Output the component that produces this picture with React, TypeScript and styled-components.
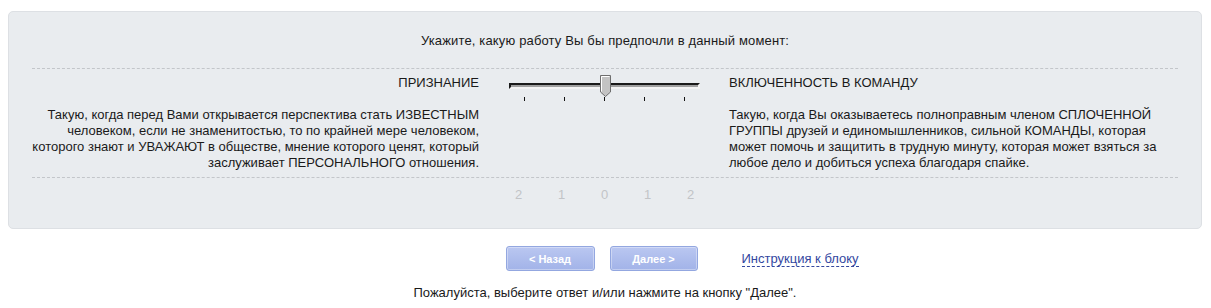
import styled, { createGlobalStyle } from 'styled-components';

const GlobalStyle = createGlobalStyle`
  body {
    margin: 0;
    background: #ffffff;
    font-family: 'Liberation Sans', Arial, sans-serif;
    font-size: 13px;
    color: #1a1a1a;
  }
`;

const Page = styled.div`
  padding: 11px 9px 0 8px;
`;

const Panel = styled.section`
  background: #e9ecef;
  border: 1px solid #dde0e4;
  border-radius: 5px;
  padding: 21px 23px 25px 23px;
`;

const Question = styled.p`
  margin: 0 0 19px;
  text-align: center;
  line-height: 16px;
  letter-spacing: 0.15px;
`;

const Row = styled.div`
  display: grid;
  grid-template-columns: 448px 249px 1fr;
  grid-template-rows: auto auto;
  row-gap: 16px;
  border-top: 1px dashed #c3c6ca;
  padding: 6px 0;
`;

const ScaleRow = styled.div`
  display: grid;
  grid-template-columns: 448px 249px 1fr;
  border-top: 1px dashed #c3c6ca;
  padding-top: 9px;
`;

const Heading = styled.h4<{ $side: 'left' | 'right' }>`
  margin: 0;
  font-size: 13px;
  font-weight: normal;
  line-height: 16px;
  text-transform: uppercase;
  text-align: ${({ $side }) => $side};
  padding-right: ${({ $side }) => ($side === 'right' ? '1px' : '0')};
`;

const Description = styled.p<{ $side: 'left' | 'right' }>`
  margin: 0;
  line-height: 16px;
  text-align: ${({ $side }) => $side};
  grid-column: ${({ $side }) => ($side === 'left' ? 3 : 1)};
  padding-right: ${({ $side }) => ($side === 'left' ? '12px' : '1px')};
`;

const SliderCell = styled.div`
  grid-column: 2;
  grid-row: 1 / 3;
  display: flex;
  justify-content: center;
`;

const Slider = styled.div`
  position: relative;
  width: 191px;
  padding-top: 8px;
`;

const Track = styled.div`
  height: 2px;
  background: #ffffff;
  border: 2px solid;
  border-color: #1a1a1a #f4f4f4 #f4f4f4 #1a1a1a;
  box-shadow: 0 0 0 1px #a0a0a0 inset;
`;

const Thumb = styled.svg`
  position: absolute;
  left: 91px;
  top: 0;
`;

const Ticks = styled.div`
  display: flex;
  justify-content: space-between;
  padding: 8px 15px 0 15px;
`;

const Tick = styled.span`
  width: 1px;
  height: 4px;
  background: #111;
`;

const Scale = styled.div`
  grid-column: 2;
  display: flex;
  justify-content: center;
`;

const ScaleValue = styled.span`
  width: 43px;
  text-align: center;
  font-size: 13px;
  line-height: 16px;
  color: #c2c4c7;
`;

const Actions = styled.div`
  display: grid;
  grid-template-columns: 1fr auto 1fr;
  align-items: center;
  margin-top: 17px;
  padding-right: 7px;
`;

const Buttons = styled.div`
  grid-column: 2;
  display: flex;
  gap: 15px;
`;

const NavButton = styled.button<{ $width: number }>`
  width: ${({ $width }) => $width}px;
  height: 25px;
  border: 1px solid #93a7e0;
  border-radius: 3px;
  background: linear-gradient(#bac7f1, #a2b3e8);
  box-shadow: inset 0 0 0 1px rgba(255, 255, 255, 0.35);
  color: #ffffff;
  font-family: 'Liberation Sans', Arial, sans-serif;
  font-size: 11px;
  font-weight: bold;
  padding: 0;
`;

const HelpLink = styled.a`
  justify-self: start;
  margin-left: 44px;
  color: #33479f;
  font-size: 13px;
  text-decoration: none;
  border-bottom: 1px dashed #33479f;
  line-height: 15px;
`;

const Hint = styled.p`
  margin: 14px 0 0;
  text-align: center;
  line-height: 16px;
`;

const scale = ['2', '1', '0', '1', '2'];

export default function App() {
  return (
    <Page>
      <GlobalStyle />
      <Panel>
        <Question>Укажите, какую работу Вы бы предпочли в данный момент:</Question>
        <Row>
          <Heading $side="right">Признание</Heading>
          <SliderCell>
            <Slider>
              <Track />
              <Thumb width="11" height="22" viewBox="0 0 11 22">
                <path d="M0.5 0.5 H10.5 V17 L5.5 21.5 L0.5 17 Z" fill="#c3c3c3" stroke="#6e6e6e" />
                <path d="M1.5 1.5 H9.5" stroke="#ffffff" />
                <path d="M1.5 1.5 V16.5" stroke="#ffffff" />
              </Thumb>
              <Ticks>
                {scale.map((_, i) => (
                  <Tick key={i} />
                ))}
              </Ticks>
            </Slider>
          </SliderCell>
          <Heading $side="left">Включенность в команду</Heading>
          <Description $side="right">
            Такую, когда перед Вами открывается перспектива стать ИЗВЕСТНЫМ человеком, если не
            знаменитостью, то по крайней мере человеком, которого знают и УВАЖАЮТ в обществе,
            мнение которого ценят, который заслуживает ПЕРСОНАЛЬНОГО отношения.
          </Description>
          <Description $side="left">
            Такую, когда Вы оказываетесь полноправным членом СПЛОЧЕННОЙ ГРУППЫ друзей и
            единомышленников, сильной КОМАНДЫ, которая может помочь и защитить в трудную минуту,
            которая может взяться за любое дело и добиться успеха благодаря спайке.
          </Description>
        </Row>
        <ScaleRow>
          <Scale>
            {scale.map((v, i) => (
              <ScaleValue key={i}>{v}</ScaleValue>
            ))}
          </Scale>
        </ScaleRow>
      </Panel>
      <Actions>
        <Buttons>
          <NavButton $width={89}>&lt; Назад</NavButton>
          <NavButton $width={88}>Далее &gt;</NavButton>
        </Buttons>
        <HelpLink>Инструкция к блоку</HelpLink>
      </Actions>
      <Hint>Пожалуйста, выберите ответ и/или нажмите на кнопку "Далее".</Hint>
    </Page>
  );
}
